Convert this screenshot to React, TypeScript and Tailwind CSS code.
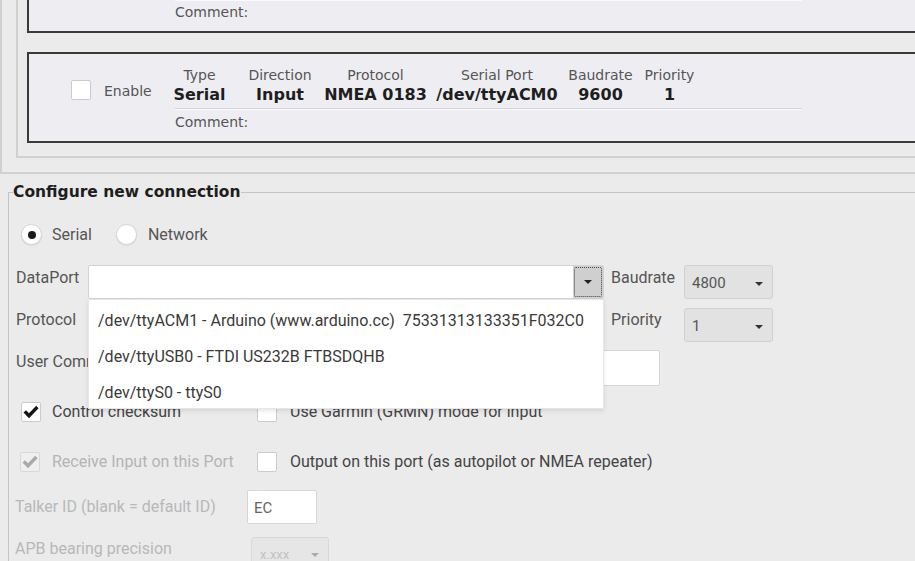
import React from 'react';

const cols = [
  { h: 'Type', v: 'Serial', cls: 'w-[49px]' },
  { h: 'Direction', v: 'Input', cls: 'ml-[24px] w-[64px]' },
  { h: 'Protocol', v: 'NMEA 0183', cls: 'ml-[12px] w-[103px]' },
  { h: 'Serial Port', v: '/dev/ttyACM0', cls: 'ml-[10px] w-[120px]' },
  { h: 'Baudrate', v: '9600', cls: 'ml-[12px] w-[63px]' },
  { h: 'Priority', v: '1', cls: 'ml-[12px] w-[51px]' },
];

const ports = [
  '/dev/ttyACM1 - Arduino (www.arduino.cc)  75331313133351F032C0',
  '/dev/ttyUSB0 - FTDI US232B FTBSDQHB',
  '/dev/ttyS0 - ttyS0',
];

function Caret({ className = '' }: { className?: string }) {
  return (
    <svg width="8" height="4" viewBox="0 0 8 4" className={className}>
      <path d="M0 0h8L4 4z" fill="currentColor" />
    </svg>
  );
}

function CheckBox({ checked = false, disabled = false }: { checked?: boolean; disabled?: boolean }) {
  return (
    <div
      className={`w-[20px] h-[20px] shrink-0 rounded-[2px] border flex items-center justify-center ${
        disabled ? 'bg-[#efefef] border-[#d8d8d8]' : 'bg-white border-[#cbcbcb]'
      }`}
    >
      {checked && (
        <svg width="16" height="14" viewBox="0 0 16 14" className={disabled ? 'text-[#a9a9a9]' : 'text-[#161616]'}>
          <path d="M0.5 7.6 L3 5.2 L6 8.2 L13.2 0.8 L15.6 3.2 L6 13.2 Z" fill="currentColor" />
        </svg>
      )}
    </div>
  );
}

function Radio({ on = false }: { on?: boolean }) {
  return (
    <div className="w-[21px] h-[21px] rounded-full bg-white border border-[#d4d4d4] shadow-[0_1px_1px_rgba(0,0,0,0.08)] flex items-center justify-center">
      {on && <div className="w-[8px] h-[8px] rounded-full bg-[#1c1c1c]" />}
    </div>
  );
}

function Combo({ value, wide = false }: { value: string; wide?: boolean }) {
  return (
    <div
      className={`${wide ? 'w-[516px]' : 'w-[89px]'} h-[34px] bg-[#e2e2e2] border border-[#d0d0d0] rounded-[3px] flex items-center justify-between pl-[7px] pr-[9px] pt-[3px] text-[15px] text-[#555]`}
    >
      <span>{value}</span>
      <Caret className="text-[#333]" />
    </div>
  );
}

export default function App() {
  return (
    <div className="w-[915px] h-[561px] overflow-hidden bg-[#ebebeb] font-['Roboto',sans-serif] text-[16px]">
      {/* connections list */}
      <div className="w-[1000px] h-[174px] border-l-2 border-b-2 border-[#d0d0d0]">
        <div className="ml-[14px] h-[158px] border-l-2 border-b-2 border-[#d0d0d0] pl-[9px]">
          <div className="h-[33px] border-l-2 border-b-2 border-[#3a3a3a] bg-[#eeeef2] pl-[146px] font-['DejaVu_Sans',sans-serif]">
            <div className="w-[627px] h-px bg-[#fafafc]" />
            <div className="mt-[3px] text-[14px] leading-[17px] text-[#555]">Comment:</div>
          </div>

          <div className="mt-[19px] h-[91px] border-2 border-[#3a3a3a] bg-[#eeeef2] flex font-['DejaVu_Sans',sans-serif]">
            <div className="w-[146px] pl-[42px] pt-[16px] flex items-center h-[56px]">
              <CheckBox />
              <span className="ml-[13px] text-[14px] text-[#555] mt-[2px]">Enable</span>
            </div>
            <div className="pt-[13px]">
              <div className="flex">
                {cols.map(c => (
                  <div key={c.h} className={`${c.cls} flex flex-col items-center whitespace-nowrap`}>
                    <span className="text-[14px] leading-[17px] text-[#555]">{c.h}</span>
                    <span className="mt-[1px] text-[16px] leading-[19px] font-bold text-[#1e1e1e]">{c.v}</span>
                  </div>
                ))}
              </div>
              <div className="mt-[4px] w-[627px] h-[2px] border-t border-t-[#d4d4da] border-b border-b-[#fafafc]" />
              <div className="mt-[4px] text-[14px] leading-[17px] text-[#555]">Comment:</div>
            </div>
          </div>
        </div>
      </div>

      {/* new connection */}
      <fieldset className="ml-[8px] mt-[9px] w-[1000px] h-[420px] border-t border-l border-[#c4c4c4]">
        <legend className="ml-[4px] font-['DejaVu_Sans',sans-serif] font-bold text-[15.5px] leading-[19px] text-[#1e1e1e]">
          Configure new connection
        </legend>

        <div className="pl-[7px] text-[#555]">
          <div className="mt-[22px] ml-[5px] flex items-center h-[21px]">
            <Radio on />
            <span className="ml-[10px]">Serial</span>
            <div className="ml-[24px]">
              <Radio />
            </div>
            <span className="ml-[11px]">Network</span>
          </div>

          <div className="mt-[20px] flex items-start h-[34px]">
            <span className="w-[72px] pt-[3px] leading-[19px]">DataPort</span>
            <div className="relative w-[516px] h-[34px] bg-white border border-[#d2d2d2] rounded-[2px] flex justify-end">
              <div className="w-[30px] h-full bg-[#cfcfcf] p-[1px]">
                <div className="h-full border border-dotted border-[#444] rounded-[2px] flex items-center justify-center">
                  <Caret className="text-[#222]" />
                </div>
              </div>
              <div className="absolute left-[-1px] top-[33px] w-[516px] h-[110px] bg-white border border-[#e6e6e6] shadow-[0_2px_4px_rgba(0,0,0,0.1)] z-10 pt-[3px]">
                {ports.map(p => (
                  <div key={p} className="h-[36px] flex items-center pl-[9px] whitespace-pre text-[#3a3a3a]">
                    {p}
                  </div>
                ))}
              </div>
            </div>
            <span className="ml-[7px] w-[73px] pt-[3px] leading-[19px]">Baudrate</span>
            <Combo value="4800" />
          </div>

          <div className="mt-[9px] flex items-start h-[34px]">
            <span className="w-[72px] pt-[2px] leading-[19px]">Protocol</span>
            <Combo value="NMEA 0183" wide />
            <span className="ml-[7px] w-[73px] pt-[2px] leading-[19px]">Priority</span>
            <Combo value="1" />
          </div>

          <div className="mt-[8px] flex items-start h-[36px]">
            <span className="w-[72px] shrink-0 pt-[2px] leading-[19px] whitespace-nowrap">User Comment</span>
            <div className="w-[572px] h-[36px] bg-white border border-[#d6d6d6] rounded-[2px]" />
          </div>

          <div className="mt-[16px] flex items-center h-[20px]">
            <div className="w-[241px] pl-[5px] flex items-center">
              <CheckBox checked />
              <span className="ml-[11px] text-[#444]">Control checksum</span>
            </div>
            <CheckBox />
            <span className="ml-[13px] text-[#444]">Use Garmin (GRMN) mode for input</span>
          </div>

          <div className="mt-[30px] flex items-center h-[20px]">
            <div className="w-[241px] pl-[4px] flex items-center">
              <CheckBox checked disabled />
              <span className="ml-[12px] text-[#b4b4b4]">Receive Input on this Port</span>
            </div>
            <CheckBox />
            <span className="ml-[13px] text-[#444]">Output on this port (as autopilot or NMEA repeater)</span>
          </div>

          <div className="mt-[18px] flex items-center h-[34px]">
            <span className="w-[232px] -ml-px text-[#b8b8b8]">Talker ID (blank = default ID)</span>
            <div className="w-[70px] h-[34px] bg-white border border-[#d6d6d6] rounded-[2px] flex items-center pl-[6px] pt-[3px] text-[15px] text-[#666]">
              EC
            </div>
          </div>

          <div className="mt-[13px] flex items-start h-[34px]">
            <span className="w-[236px] -ml-px pt-[2px] leading-[19px] text-[#b8b8b8]">APB bearing precision</span>
            <div className="w-[78px] h-[34px] bg-[#e6e6e6] border border-[#d9d9d9] rounded-[3px] flex items-center justify-between pl-[8px] pr-[9px] pt-[2px] text-[13px] text-[#c2c2c2]">
              <span>x.xxx</span>
              <Caret className="text-[#aaa]" />
            </div>
          </div>
        </div>
      </fieldset>
    </div>
  );
}
